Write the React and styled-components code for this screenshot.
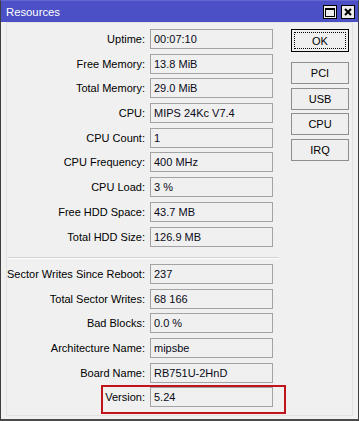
import styled, { createGlobalStyle } from 'styled-components'

const GlobalStyle = createGlobalStyle`
  html, body {
    margin: 0;
    padding: 0;
    background: #f0f0f0;
  }
  body {
    font-family: 'Liberation Sans', Arial, sans-serif;
    font-size: 11px;
    color: #000;
  }
`

const Window = styled.div`
  width: 359px;
  height: 421px;
  box-sizing: border-box;
  display: flex;
  flex-direction: column;
  background: #f0f0f0;
  border: 1px solid #3f3f3f;
  border-top-color: #6367cf;
  border-bottom: 2px solid #4a4a4a;
`

const TitleBar = styled.div`
  height: 21px;
  flex: none;
  display: flex;
  align-items: center;
  padding: 0 3px 0 5px;
  background: #4b50c6;
  color: #fff;
  font-size: 11.3px;
`

const TitleText = styled.span`
  flex: 1;
  padding-top: 1px;
`

const TitleButtons = styled.div`
  display: flex;
  gap: 4px;
  padding-top: 1px;
`

const TitleButton = styled.div`
  width: 14px;
  height: 14px;
  box-sizing: border-box;
  border: 1px solid #000;
  background: #ececec;
  display: flex;
  align-items: center;
  justify-content: center;
`

const Content = styled.div`
  flex: 1;
  display: flex;
  padding: 0 5px 3px 5px;
`

const Panel = styled.div`
  flex: 1;
  position: relative;
  display: flex;
  align-items: flex-start;
  padding-top: 6px;
  border: 1px solid #e2e2e2;
`

const Form = styled.div`
  display: grid;
  grid-template-columns: 138px 123px;
  column-gap: 5px;
  row-gap: 4.7px;
  align-content: start;
`

const Label = styled.div`
  align-self: center;
  text-align: right;
  white-space: nowrap;
`

const Field = styled.div`
  height: 20px;
  box-sizing: border-box;
  border: 1px solid #a3a3a3;
  background: #f0f0f0;
  padding: 0 3px;
  display: flex;
  align-items: center;
  white-space: nowrap;
  color: #0a0a18;
`

const Separator = styled.div`
  grid-column: 1 / -1;
  height: 8px;
  margin: 0 -6px 0 1px;
  background:
    linear-gradient(#d2d2d2, #d2d2d2) 0 6px / 100% 1px no-repeat,
    linear-gradient(#ffffff, #ffffff) 0 7px / 100% 1px no-repeat;
`

const Buttons = styled.div`
  width: 58px;
  margin-left: 18px;
  display: flex;
  flex-direction: column;
  gap: 3.7px;
`

const Button = styled.button`
  position: relative;
  height: ${p => (p.$primary ? '23px' : '22px')};
  margin-bottom: ${p => (p.$primary ? '6.3px' : '0')};
  box-sizing: border-box;
  padding: 0;
  font-family: inherit;
  font-size: 11px;
  color: #000;
  background: #efefef;
  border: 1px solid ${p => (p.$primary ? '#000' : '#8e8e8e')};

  &::after {
    content: '';
    display: ${p => (p.$primary ? 'block' : 'none')};
    position: absolute;
    inset: 2px;
    border: 1px dotted #000;
  }
`

const Highlight = styled.div`
  position: absolute;
  left: 94px;
  top: 362px;
  width: 185px;
  height: 29px;
  box-sizing: border-box;
  border: 2px solid #c0141c;
  pointer-events: none;
`

const topFields = [
  ['Uptime', '00:07:10'],
  ['Free Memory', '13.8 MiB'],
  ['Total Memory', '29.0 MiB'],
  ['CPU', 'MIPS 24Kc V7.4'],
  ['CPU Count', '1'],
  ['CPU Frequency', '400 MHz'],
  ['CPU Load', '3 %'],
  ['Free HDD Space', '43.7 MB'],
  ['Total HDD Size', '126.9 MB'],
]

const bottomFields = [
  ['Sector Writes Since Reboot', '237'],
  ['Total Sector Writes', '68 166'],
  ['Bad Blocks', '0.0 %'],
  ['Architecture Name', 'mipsbe'],
  ['Board Name', 'RB751U-2HnD'],
  ['Version', '5.24'],
]

const renderRows = rows =>
  rows.map(([name, value]) => [
    <Label key={name + '-l'}>{name}:</Label>,
    <Field key={name + '-v'}>{value}</Field>,
  ])

export default function App () {
  return (
    <>
      <GlobalStyle />
      <Window>
        <TitleBar>
          <TitleText>Resources</TitleText>
          <TitleButtons>
            <TitleButton>
              <svg width="10" height="9" viewBox="0 0 10 9">
                <rect x="0.5" y="0.5" width="9" height="8" fill="none" stroke="#000" />
                <rect x="0" y="0" width="10" height="2" fill="#000" />
              </svg>
            </TitleButton>
            <TitleButton>
              <svg width="8" height="8" viewBox="0 0 8 8">
                <path d="M1 1 L7 7 M7 1 L1 7" stroke="#000" strokeWidth="2" />
              </svg>
            </TitleButton>
          </TitleButtons>
        </TitleBar>
        <Content>
          <Panel>
            <Form>
              {renderRows(topFields)}
              <Separator />
              {renderRows(bottomFields)}
            </Form>
            <Buttons>
              <Button $primary>OK</Button>
              <Button>PCI</Button>
              <Button>USB</Button>
              <Button>CPU</Button>
              <Button>IRQ</Button>
            </Buttons>
            <Highlight />
          </Panel>
        </Content>
      </Window>
    </>
  )
}
